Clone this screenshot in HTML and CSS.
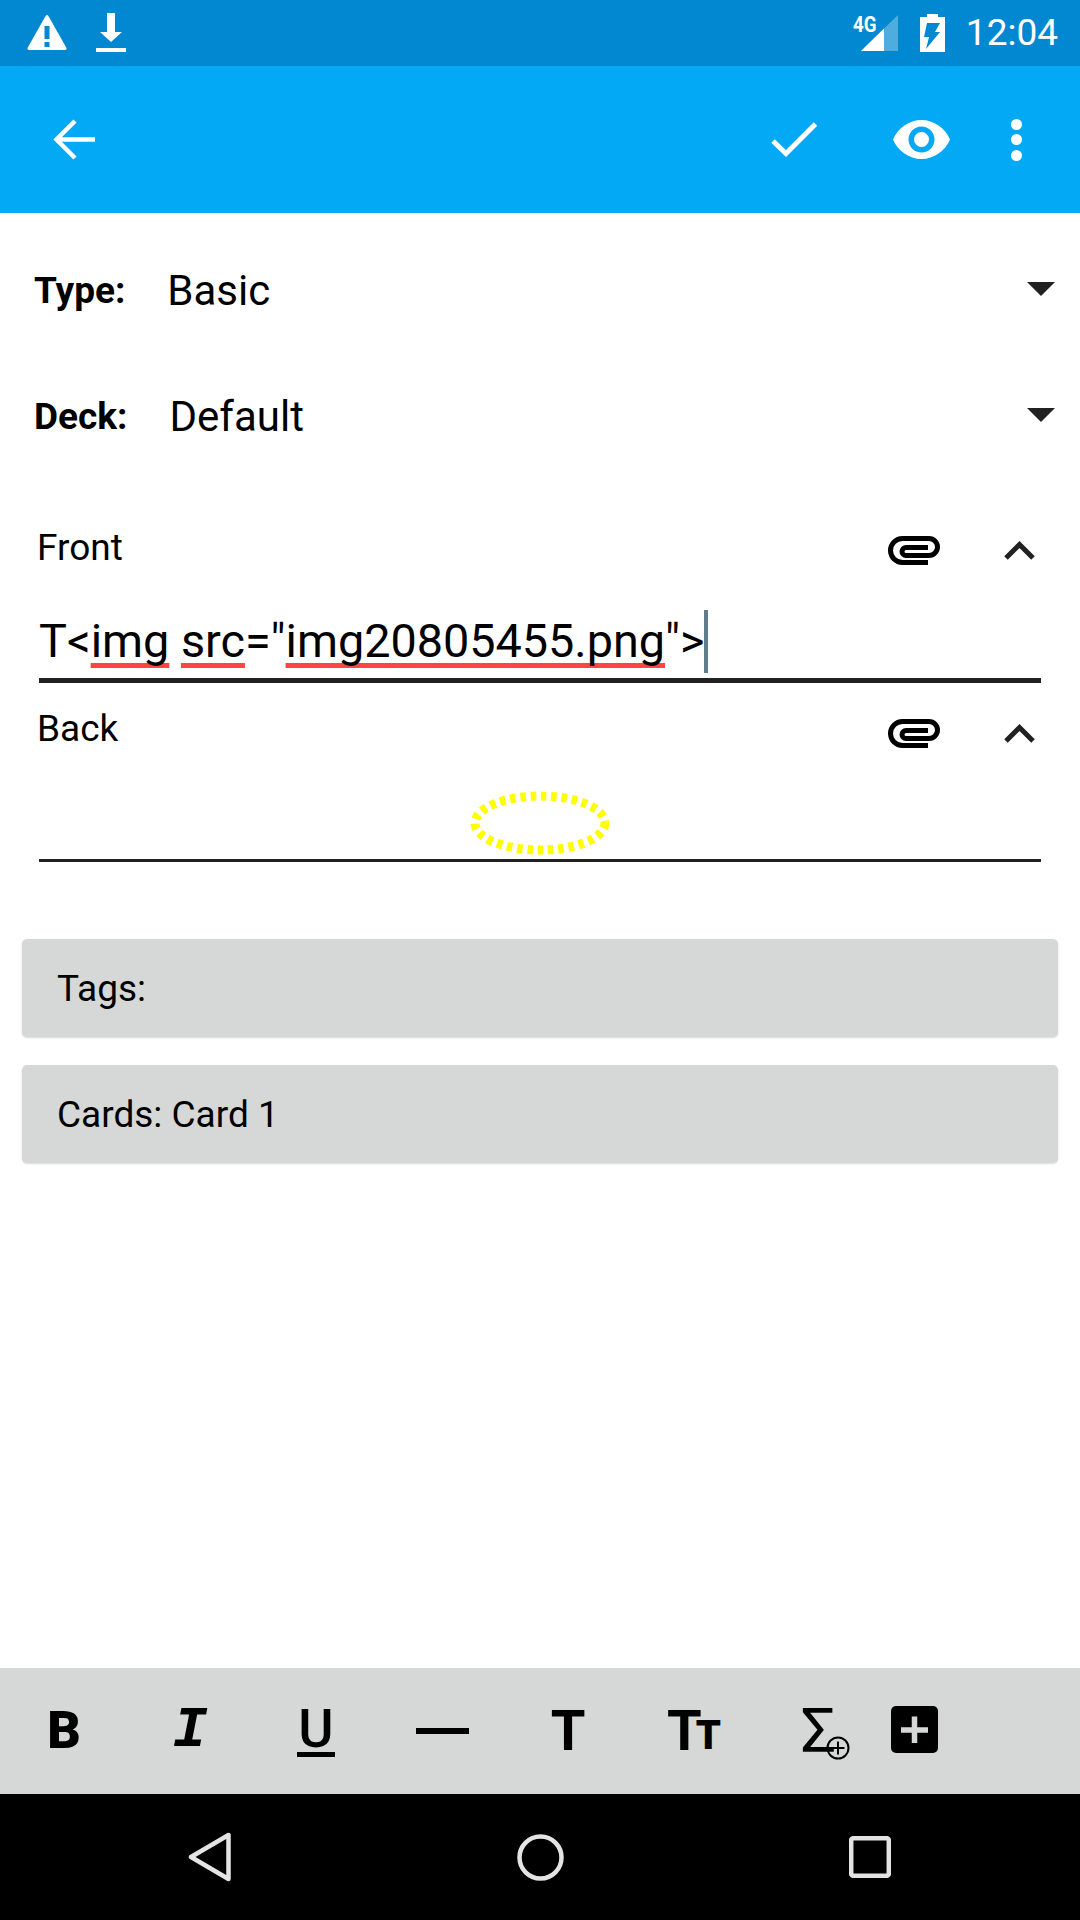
FILE: index.html
```html
<!DOCTYPE html>
<html lang="en">
<head>
<meta charset="utf-8">
<title>Add note</title>
<link rel="stylesheet" href="styles.css">
</head>
<body>
<div class="screen">
  <header class="statusbar">
    <svg class="ic-warning" width="40" height="36" viewBox="0 0 40 36"><path fill="#fff" fill-rule="evenodd" d="M20 0 Q21 0 22 2 L39.5 33 Q40 35 38 35 H2 Q0 35 .5 33 L18 2 Q19 0 20 0Z M17.500 11 V24 H22.500 V11Z M17.500 27 V32 H22.500 V27Z"/></svg>
    <svg class="ic-download" width="30" height="40" viewBox="0 0 30 40"><path fill="#fff" d="M11 0 H19 V19 H26 L15 29 L4 19 H11Z M0 35 H30 V39 H0Z"/></svg>
    <div class="status-right">
      <div class="signal">
        <span class="net">4G</span>
        <svg width="37" height="36" viewBox="0 0 37 36"><polygon fill="#fff" opacity=".3" points="0,36 37,0 37,36"/><polygon fill="#fff" points="0,36 23,13.500 23,36"/></svg>
      </div>
      <svg class="ic-battery" width="25" height="38" viewBox="0 0 25 38"><path fill="#fff" fill-rule="evenodd" d="M7 0 H18 V3 H25 V38 H0 V3 H7Z M7 9 H20 L15 18 H20 L6 35 L9 23 H4Z"/></svg>
      <span class="clock">12:04</span>
    </div>
  </header>

  <nav class="appbar">
    <svg class="ic-back" width="42" height="41" viewBox="0 0 42 41"><path fill="none" stroke="#fff" stroke-width="4.500" d="M42 20.500 H4 M22 2 L3.500 20.500 L22 39"/></svg>
    <svg class="ic-check" width="46" height="35" viewBox="0 0 46 35"><path fill="none" stroke="#fff" stroke-width="5" d="M2 19 L15 31.500 L44.500 2"/></svg>
    <svg class="ic-eye" width="57" height="39" viewBox="0 0 57 39"><path fill="#fff" fill-rule="evenodd" d="M28.500 0 C41 0 52 8 57 19.500 C52 31 41 39 28.500 39 C16 39 5 31 0 19.500 C5 8 16 0 28.500 0Z M28.500 6.500 A13 13 0 1 0 28.500 32.500 A13 13 0 1 0 28.500 6.500Z M28.500 12 A7.500 7.500 0 1 1 28.500 27 A7.500 7.500 0 1 1 28.500 12Z"/></svg>
    <div class="overflow"><i></i><i></i><i></i></div>
  </nav>

  <main class="content">
    <div class="spinner">
      <span class="spin-label">Type:</span>
      <span class="spin-value">Basic</span>
      <span class="spin-arrow"></span>
    </div>
    <div class="spinner">
      <span class="spin-label">Deck:</span>
      <span class="spin-value">Default</span>
      <span class="spin-arrow"></span>
    </div>

    <section class="field field-front">
      <div class="field-head">
        <span class="field-label">Front</span>
        <svg class="ic-clip" width="53" height="29" viewBox="0 0 53 29"><path fill="none" stroke="#000" stroke-width="5" d="M40 26.500 H14.500 A12 12 0 0 1 14.500 2.500 H41 A8.500 8.500 0 0 1 41 19.500 H18 A4 4 0 0 1 18 11.500 H40"/></svg>
        <svg class="ic-chevron" width="31" height="19" viewBox="0 0 31 19"><path fill="none" stroke="#212121" stroke-width="5" d="M2 17 L15.500 3.500 L29 17"/></svg>
      </div>
      <div class="editor editor-focused"><span class="editor-text">T&lt;<span class="typo">img</span> <span class="typo">src</span>="<span class="typo">img20805455.png</span>"&gt;</span><span class="caret"></span></div>
    </section>

    <section class="field field-back">
      <div class="field-head">
        <span class="field-label">Back</span>
        <svg class="ic-clip" width="53" height="29" viewBox="0 0 53 29"><path fill="none" stroke="#000" stroke-width="5" d="M40 26.500 H14.500 A12 12 0 0 1 14.500 2.500 H41 A8.500 8.500 0 0 1 41 19.500 H18 A4 4 0 0 1 18 11.500 H40"/></svg>
        <svg class="ic-chevron" width="31" height="19" viewBox="0 0 31 19"><path fill="none" stroke="#212121" stroke-width="5" d="M2 17 L15.500 3.500 L29 17"/></svg>
      </div>
      <div class="editor editor-blur">
        <svg class="spinner-oval" width="140" height="64" viewBox="0 0 140 64"><ellipse cx="70" cy="32" rx="65" ry="27" fill="none" stroke="#ffff00" stroke-width="9" stroke-dasharray="5.500 4.800"/></svg>
      </div>
    </section>

    <div class="btn">Tags:</div>
    <div class="btn">Cards: Card 1</div>
  </main>

  <div class="format-bar">
    <div class="slot"><span class="f-b">B</span></div>
    <div class="slot"><span class="f-i">I</span></div>
    <div class="slot"><span class="f-u">U</span></div>
    <div class="slot"><span class="f-hr"></span></div>
    <div class="slot"><span class="f-t">T</span></div>
    <div class="slot"><span class="f-t f-t-tight">T</span><span class="f-t-small">T</span></div>
    <div class="slot slot-sigma"><span class="f-sigma">Σ</span><svg class="ic-cplus" width="24" height="24" viewBox="0 0 24 24"><circle cx="12" cy="12" r="10.500" fill="none" stroke="#000" stroke-width="2"/><path stroke="#000" stroke-width="2" d="M5.500 12 H18.500 M12 5.500 V18.500"/></svg></div>
    <div class="slot slot-narrow">
      <svg width="47" height="47" viewBox="0 0 47 47"><rect width="47" height="47" rx="5" fill="#000"/><path fill="none" stroke="#d6d8d7" stroke-width="5.500" d="M10 24 H37 M23.500 10.500 V37"/></svg>
    </div>
  </div>

  <footer class="navbar">
    <div class="nav-item"><svg width="44" height="50" viewBox="0 0 44 50"><path fill="none" stroke="#e4e4e4" stroke-width="4.500" stroke-linejoin="round" d="M40.500 3 V47 L3 25Z"/></svg></div>
    <div class="nav-item"><svg width="47" height="47" viewBox="0 0 47 47"><circle cx="23.500" cy="23.500" r="21" fill="none" stroke="#e4e4e4" stroke-width="4.500"/></svg></div>
    <div class="nav-item"><svg width="42" height="42" viewBox="0 0 42 42"><rect x="2.200" y="2.200" width="37.600" height="37.600" rx="2" fill="none" stroke="#e4e4e4" stroke-width="4.500"/></svg></div>
  </footer>
</div>
</body>
</html>
```

FILE: styles.css
```css
* { box-sizing: border-box; }
html, body { margin: 0; padding: 0; }
body { font-family: Roboto, "Noto Sans", sans-serif; color: #000; background: #fff; }
.screen { width: 1080px; height: 1920px; display: flex; flex-direction: column; overflow: hidden; }

.statusbar { height: 66px; flex: none; background: #0288d1; display: flex; align-items: center; padding: 0 22px 0 27px; color: #fff; }
.ic-warning { margin-top: -1px; }
.ic-download { margin-left: 29px; margin-top: -1px; }
.status-right { margin-left: auto; display: flex; align-items: center; }
.signal { position: relative; width: 37px; height: 36px; margin-right: 22px; }
.signal svg { display: block; }
.net { position: absolute; left: -8px; top: -1px; font-size: 22px; line-height: 22px; font-weight: 700; transform: scaleX(.85); transform-origin: left center; }
.ic-battery { margin-right: 21px; }
.clock { font-size: 37px; line-height: 40px; }

.appbar { height: 147px; flex: none; background: #03a9f4; display: flex; align-items: center; padding: 0 0 0 53px; }
.ic-check { margin-left: auto; }
.ic-eye { margin-left: 76px; }
.overflow { margin-left: 61px; margin-right: 58px; display: flex; flex-direction: column; gap: 4.500px; }
.overflow i { width: 11px; height: 11px; border-radius: 50%; background: #fff; display: block; }

.content { flex: 1; padding-top: 14px; }
.spinner { height: 126px; display: flex; align-items: center; padding: 0 25px 0 34px; }
.spin-label { font-size: 37px; font-weight: 700; margin-right: 42px; }
.spin-value { font-size: 42px; margin-top: 1px; }
.spin-arrow { margin-left: auto; width: 0; height: 0; border-style: solid; border-width: 14px 14px 0; border-color: #212121 transparent transparent; margin-top: -3px; }

.field { margin: 0 39px; display: flex; flex-direction: column; }
.field-front { height: 173px; margin-top: 31px; }
.field-back { height: 179px; padding-top: 10px; }
.field-back .field-label { margin-top: -4px; }
.field-head { height: 74px; flex: none; display: flex; align-items: center; }
.field-label { font-size: 37px; margin-left: -2px; }
.ic-clip { margin-left: auto; margin-right: 63px; margin-top: 7px; }
.ic-chevron { margin-right: 6px; margin-top: 7px; }
.editor { flex: 1; display: flex; align-items: center; }
.editor-focused { font-size: 46.75px; border-bottom: 5px solid #212121; padding-top: 20px; }
.editor-text { white-space: pre; }
.typo { text-decoration: underline #ff4444 5px; text-underline-offset: 6px; text-decoration-skip-ink: none; }
.caret { width: 4px; height: 63px; background: #607d8b; flex: none; }
.editor-blur { justify-content: center; border-bottom: 3px solid #212121; }
.spinner-oval { margin-top: 20px; }

.btn { height: 98px; margin: 0 22px 28px; background: #d6d8d7; border-radius: 5px; box-shadow: 0 1px 2px rgba(0,0,0,.15); font-size: 37px; display: flex; align-items: center; padding-left: 35px; }
.field-back + .btn { margin-top: 77px; }

.format-bar { height: 126px; flex: none; background: #d6d8d7; display: flex; padding-left: 1px; color: #000; }
.slot { width: 126px; display: flex; align-items: center; justify-content: center; }
.slot-sigma { padding-left: 11px; }
.slot-narrow { width: 63px; margin-top: -3px; }
.f-b { font-size: 52px; font-weight: 900; line-height: 1; }
.f-i { font-family: "Liberation Mono", monospace; font-style: italic; font-weight: 700; font-size: 58px; line-height: 1; }
.f-u { font-size: 54px; font-weight: 500; line-height: 47px; border-bottom: 5px solid #000; padding: 0 1px; }
.f-hr { width: 53px; height: 6px; background: #000; }
.f-t { font-size: 56px; font-weight: 700; line-height: 1; }
.f-t-tight { letter-spacing: -6px; }
.f-t-small { font-size: 40px; font-weight: 900; line-height: 1; margin-top: 9px; }
.f-sigma { font-size: 62px; line-height: 1; margin-top: -1px; font-weight: 400; }
.ic-cplus { margin-left: -10px; margin-top: 34px; }

.navbar { height: 126px; flex: none; background: #000; display: flex; padding: 0 45px; }
.nav-item { flex: 1; display: flex; align-items: center; justify-content: center; }
```
